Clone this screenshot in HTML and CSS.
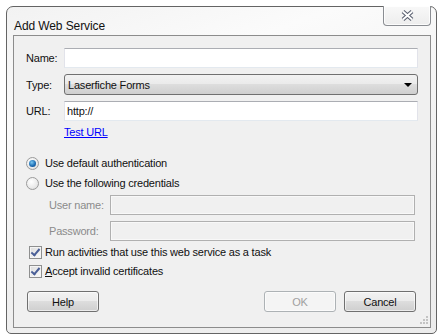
FILE: index.html
```html
<!DOCTYPE html>
<html lang="en">
<head>
    <meta charset="UTF-8">
    <title>Add Web Service</title>
    <link rel="stylesheet" href="styles.css">
</head>
<body>
    <div class="window">
        <div class="titlebar">
            <span class="title">Add Web Service</span>
            <div class="close-btn">
                <svg width="13" height="11" viewBox="0 0 13 11">
                    <path d="M2 1.5 L11 9.5 M11 1.5 L2 9.5" stroke="#5a6070" stroke-width="4" fill="none"/>
                    <path d="M2 1.5 L11 9.5 M11 1.5 L2 9.5" stroke="#ffffff" stroke-width="1.8" fill="none"/>
                </svg>
            </div>
        </div>

        <div class="client">
            <div class="field-row">
                <span class="field-label">Name:</span>
                <div class="textbox"></div>
            </div>
            <div class="field-row type-row">
                <span class="field-label">Type:</span>
                <div class="combo">
                    <span>Laserfiche Forms</span>
                    <span class="combo-arrow"></span>
                </div>
            </div>
            <div class="field-row">
                <span class="field-label">URL:</span>
                <div class="textbox">http://</div>
            </div>
            <div class="link-row"><a href="#">Test URL</a></div>

            <div class="option-row first-option">
                <span class="radio checked"></span>
                <span>Use default authentication</span>
            </div>
            <div class="option-row">
                <span class="radio"></span>
                <span>Use the following credentials</span>
            </div>

            <div class="cred-row">
                <span class="cred-label">User name:</span>
                <div class="textbox disabled"></div>
            </div>
            <div class="cred-row">
                <span class="cred-label">Password:</span>
                <div class="textbox disabled"></div>
            </div>

            <div class="check-row first-check">
                <span class="checkbox"></span>
                <span>Run activities that use this web service as a task</span>
            </div>
            <div class="check-row">
                <span class="checkbox"></span>
                <span><u>A</u>ccept invalid certificates</span>
            </div>

            <div class="button-row">
                <div class="btn">Help</div>
                <div class="btn-group">
                    <div class="btn disabled">OK</div>
                    <div class="btn">Cancel</div>
                </div>
            </div>

            <div class="grip">
                <svg width="8" height="8" viewBox="0 0 8 8">
                    <rect x="6" y="0" width="2" height="2" fill="#c3c3c3"/>
                    <rect x="3" y="3" width="2" height="2" fill="#c3c3c3"/>
                    <rect x="6" y="3" width="2" height="2" fill="#c3c3c3"/>
                    <rect x="0" y="6" width="2" height="2" fill="#c3c3c3"/>
                    <rect x="3" y="6" width="2" height="2" fill="#c3c3c3"/>
                    <rect x="6" y="6" width="2" height="2" fill="#c3c3c3"/>
                </svg>
            </div>
        </div>
    </div>
</body>
</html>
```

FILE: styles.css
```css
/* Reset */
* {
    margin: 0;
    padding: 0;
    box-sizing: border-box;
}

body {
    font-family: "Liberation Sans", Arial, sans-serif;
    font-size: 11px;
    letter-spacing: -0.2px;
    color: #111;
    background-color: #fff;
    padding: 6px 0 0 6px;
}

/* Window frame */
.window {
    width: 431px;
    height: 328px;
    border: 1px solid #646464;
    border-radius: 7px 7px 5px 5px;
    background: linear-gradient(160deg, #f2f2f2 0%, #fbfbfb 25%, #f0f0f0 60%, #ececec 100%);
    padding: 0 5px 5px 6px;
    display: flex;
    flex-direction: column;
}

.titlebar {
    height: 28px;
    display: flex;
    justify-content: space-between;
    align-items: flex-start;
}

.title {
    font-size: 12px;
    padding-left: 1px;
    margin-top: 11px;
    line-height: 16px;
    letter-spacing: -0.1px;
}

.close-btn {
    width: 48px;
    height: 20px;
    margin-top: -1px;
    border: 1px solid #8a8d92;
    border-top: none;
    border-radius: 0 0 4px 4px;
    background: linear-gradient(#f8f8f8, #ededed);
    display: flex;
    align-items: center;
    justify-content: center;
    box-shadow: inset 0 0 0 1px rgba(255, 255, 255, 0.8);
}

/* Client area */
.client {
    flex: 1;
    background-color: #f0f0f0;
    border: 1px solid #8c8c8c;
    padding: 12px 12px 0 12px;
    position: relative;
}

.field-row {
    display: flex;
    align-items: center;
    height: 20px;
    margin-bottom: 6px;
}

.type-row {
    height: 21px;
}

.field-label {
    width: 38px;
}

.textbox {
    flex: 1;
    height: 20px;
    background-color: #fff;
    border: 1px solid #e2e3ea;
    border-top-color: #abadb3;
    border-bottom-color: #e3e9ef;
    padding-left: 2px;
    line-height: 18px;
}

.textbox.disabled {
    background-color: #f0f0f0;
    border: 1px solid #b0b0b0;
    box-shadow: inset 0 0 0 1px #f8f8f8;
}

.combo {
    flex: 1;
    height: 21px;
    border: 1px solid #707070;
    border-radius: 3px;
    background: linear-gradient(#f2f2f2 0%, #ebebeb 45%, #dddddd 50%, #cfcfcf 100%);
    display: flex;
    align-items: center;
    justify-content: space-between;
    padding: 0 5px 0 3px;
}

.combo-arrow {
    width: 0;
    height: 0;
    border-left: 4px solid transparent;
    border-right: 4px solid transparent;
    border-top: 4px solid #000;
    margin-top: 1px;
}

.link-row {
    padding-left: 38px;
    margin-top: -3px;
    line-height: 16px;
    height: 16px;
}

.link-row a {
    color: #0000ff;
}

/* Radio and check options */
.option-row,
.check-row {
    display: flex;
    align-items: center;
    height: 16px;
    margin-top: 4px;
}

.first-option {
    margin-top: 15px;
}

.radio {
    width: 13px;
    height: 13px;
    border-radius: 50%;
    border: 1px solid #9b9b9b;
    background: radial-gradient(circle at 40% 35%, #ffffff 0%, #eaeaea 60%, #d4d4d4 100%);
    margin-right: 6px;
    position: relative;
}

.radio.checked::after {
    content: "";
    position: absolute;
    left: 2px;
    top: 2px;
    width: 7px;
    height: 7px;
    border-radius: 50%;
    background: radial-gradient(circle at 40% 35%, #7ac7f2 0%, #1f6fb5 55%, #0b3f7c 100%);
}

.cred-row {
    display: flex;
    align-items: center;
    height: 20px;
    margin-top: 4px;
    padding-left: 23px;
    padding-right: 3px;
    color: #8b8b8b;
}

.cred-row + .cred-row {
    margin-top: 6px;
}

.cred-label {
    width: 61px;
}

.first-check {
    margin-top: 5px;
}

.check-row {
    margin-top: 3px;
    padding-left: 3px;
}

.checkbox {
    width: 13px;
    height: 13px;
    border: 1px solid #8e8f8f;
    background: linear-gradient(135deg, #dcdcdc, #fbfbfb);
    box-shadow: inset 0 0 0 1px #f4f4f4;
    margin-right: 3px;
    position: relative;
}

.checkbox::after {
    content: "";
    position: absolute;
    left: 3px;
    top: 0px;
    width: 3px;
    height: 7px;
    border-right: 2px solid #4a5f97;
    border-bottom: 2px solid #4a5f97;
    transform: rotate(40deg);
}

/* Buttons */
.button-row {
    display: flex;
    justify-content: space-between;
    margin-top: 12px;
    padding: 0 2px 0 1px;
}

.btn-group {
    display: flex;
    gap: 8px;
}

.btn {
    width: 72px;
    height: 21px;
    border: 1px solid #707070;
    border-radius: 3px;
    background: linear-gradient(#f2f2f2 0%, #ebebeb 45%, #dddddd 50%, #cfcfcf 100%);
    box-shadow: inset 0 0 0 1px rgba(255, 255, 255, 0.6);
    display: flex;
    align-items: center;
    justify-content: center;
}

.btn.disabled {
    border-color: #adb2b5;
    background: #f4f4f4;
    color: #a0a0a0;
}

.grip {
    position: absolute;
    right: 2px;
    bottom: 3px;
    line-height: 0;
}
```
